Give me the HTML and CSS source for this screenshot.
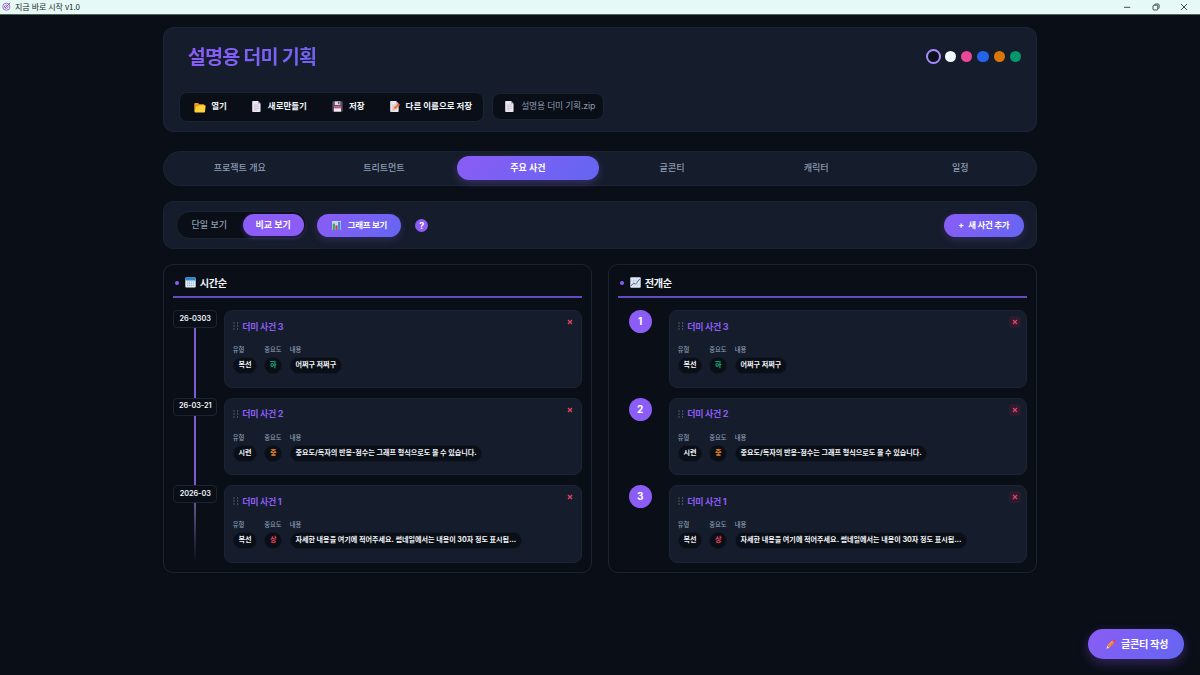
FILE: index.html
```html
<!DOCTYPE html>
<html lang="ko">
<head>
<meta charset="utf-8">
<title>지금 바로 시작 v1.0</title>
<link rel="stylesheet" href="styles.css">
</head>
<body>
<svg class="defs" width="0" height="0">
  <symbol id="page" viewBox="0 0 10 12"><path d="M1 0h5.6L9.5 3v8.2a.8.8 0 0 1-.8.8H1a.8.8 0 0 1-.8-.8V.8A.8.8 0 0 1 1 0z" fill="#ece6f2"/><path d="M6.6 0v3h2.9z" fill="#b9aec8"/><path d="M2 4.3h5.6M2 6.2h5.6M2 8.1h5.6M2 9.9h3.5" stroke="#b5adc4" stroke-width=".6"/></symbol>
  <symbol id="grip" viewBox="0 0 6 8"><g fill="#65708a"><circle cx="1" cy="1" r=".65"/><circle cx="4.6" cy="1" r=".65"/><circle cx="1" cy="4" r=".65"/><circle cx="4.6" cy="4" r=".65"/><circle cx="1" cy="7" r=".65"/><circle cx="4.6" cy="7" r=".65"/></g></symbol>
  <symbol id="cross" viewBox="0 0 6 6"><path d="M1 1l4 4M5 1L1 5" stroke="#e5405e" stroke-width="1.35" fill="none"/></symbol>
</svg>

<header class="titlebar">
  <svg class="app-icon" viewBox="0 0 10 10" fill="none" stroke="#9254c8"><circle cx="4.8" cy="5.2" r="4" stroke-width=".9"/><circle cx="4.8" cy="5.2" r="1.9" stroke-width=".8"/><path d="M3.5 6.5L9.2.8M2.3 4.6l1.7 1.8" stroke-width="1"/></svg>
  <span class="app-name">지금 바로 시작 v1.0</span>
  <div class="win-controls">
    <svg viewBox="0 0 8 8"><path d="M1 4.3h6.2"/></svg>
    <svg viewBox="0 0 8 8"><rect x="1" y="2.2" width="4.8" height="4.8" rx="1"/><path d="M2.6 1.9Q2.7 1 3.7 1H6q1.1 0 1.1 1.1v2.3q0 1-1 1.1"/></svg>
    <svg viewBox="0 0 8 8"><path d="M1 1l6 6M7 1L1 7"/></svg>
  </div>
</header>

<main class="shell">
  <section class="hero">
    <div class="hero-top">
      <h1 class="project-title">설명용 더미 기획</h1>
      <div class="themes">
        <i class="theme theme-dark"></i><i class="theme theme-light"></i><i class="theme theme-pink"></i><i class="theme theme-blue"></i><i class="theme theme-orange"></i><i class="theme theme-green"></i>
      </div>
    </div>
    <div class="hero-files">
      <div class="file-menu">
        <button class="file-btn"><svg class="folder" viewBox="0 0 12 11"><path d="M.3 1.8Q.3.9 1.2.9h2.9l1.2 1.3h4.2q.9 0 .9.9v6.5H1.2q-.9 0-.9-.9z" fill="#f09a1c"/><path d="M1.9 5q.3-.9 1.2-.9h1.6l1-.9h5q1 0 .9.9l-.6 5.5q-.1.9-1 .9H1.3q-.8 0-.7-.7z" fill="#ffd23a"/></svg>열기</button>
        <button class="file-btn"><svg class="page"><use href="#page"/></svg>새로만들기</button>
        <button class="file-btn"><svg class="disk" viewBox="0 0 12 12"><path d="M.4 1.4q0-1 1-1h9.2q1 0 1 1v9.2q0 1-1 1H1.4q-1 0-1-1z" fill="#5d4f69"/><path d="M3 .4h6v4H3z" fill="#ddd6e8"/><path d="M6.8.8h1.3v2.8H6.8z" fill="#493b58"/><path d="M2.2 6.2h7.6v5.4H2.2z" fill="#f3edf6"/><path d="M2.2 6.2h7.6v1.9H2.2z" fill="#e34f75"/></svg>저장</button>
        <button class="file-btn"><svg class="memo" viewBox="0 0 11 12"><use href="#page" width="10" height="12"/><path d="M3.4 9.7l.7-2.7 4.3-4 2 2.1-4.3 4z" fill="#f47a32"/><path d="M8.4 3l1-.8 1.7 1.9-.8 1z" fill="#e63d65"/><path d="M3.4 9.7l.7-2.7 2 2.1z" fill="#ffc08a"/></svg>다른 이름으로 저장</button>
      </div>
      <div class="file-name"><svg class="page small"><use href="#page"/></svg>설명용 더미 기획.zip</div>
    </div>
  </section>

  <nav class="tabs">
    <a class="tab">프로젝트 개요</a><a class="tab">트리트먼트</a><a class="tab active">주요 사건</a><a class="tab">글콘티</a><a class="tab">캐릭터</a><a class="tab">일정</a>
  </nav>

  <section class="toolbar">
    <div class="toggle"><span class="seg">단일 보기</span><span class="seg on">비교 보기</span></div>
    <button class="primary graph"><svg class="chart" viewBox="0 0 9 9"><path d="M0 0h9v9H0z" fill="#c9d3ea"/><path d="M.7 2.6h2.2V9H.7z" fill="#2fa866"/><path d="M3.4 4.4h2.2V9H3.4z" fill="#dc3467"/><path d="M6.1 1h2.2v8H6.1z" fill="#278ee0"/></svg>그래프 보기</button>
    <span class="help">?</span>
    <button class="primary add"><span class="plus">+</span>새 사건 추가</button>
  </section>

  <div class="columns">
    <section class="panel by-time">
      <h2 class="panel-title"><i class="bullet"></i><svg class="panel-icon" viewBox="0 0 11 11"><rect x=".3" y=".6" width="10.4" height="10" rx="1" fill="#e8eef8"/><path d="M.3 1.6q0-1 1-1h8.4q1 0 1 1v1.9H.3z" fill="#2389d2"/><path d="M2 5h7M2 6.8h7M2 8.6h7" stroke="#8ba6c8" stroke-width=".9" stroke-dasharray="1.2 .7"/></svg>시간순</h2>
      <div class="event-row"><div class="rail"><span class="date">26-0303</span><i class="line"></i></div>
        <article class="card"><svg class="close"><use href="#cross"/></svg><h3 class="card-title"><svg class="grip"><use href="#grip"/></svg>더미 사건 3</h3>
          <div class="fields"><div class="field kind"><label>유형</label><span class="chip">복선</span></div><div class="field level"><label>중요도</label><span class="chip low">하</span></div><div class="field"><label>내용</label><span class="chip">어쩌구 저쩌구</span></div></div></article></div>
      <div class="event-row"><div class="rail"><span class="date">26-03-21</span><i class="line"></i></div>
        <article class="card"><svg class="close"><use href="#cross"/></svg><h3 class="card-title"><svg class="grip"><use href="#grip"/></svg>더미 사건 2</h3>
          <div class="fields"><div class="field kind"><label>유형</label><span class="chip">시련</span></div><div class="field level"><label>중요도</label><span class="chip mid">중</span></div><div class="field"><label>내용</label><span class="chip">중요도/독자의 반응-점수는 그래프 형식으로도 볼 수 있습니다.</span></div></div></article></div>
      <div class="event-row"><div class="rail"><span class="date">2026-03</span><i class="line fade"></i></div>
        <article class="card"><svg class="close"><use href="#cross"/></svg><h3 class="card-title"><svg class="grip"><use href="#grip"/></svg>더미 사건 1</h3>
          <div class="fields"><div class="field kind"><label>유형</label><span class="chip">복선</span></div><div class="field level"><label>중요도</label><span class="chip high">상</span></div><div class="field"><label>내용</label><span class="chip">자세한 내용을 여기에 적어주세요. 썸네일에서는 내용이 30자 정도 표시됩...</span></div></div></article></div>
    </section>

    <section class="panel by-story">
      <h2 class="panel-title"><i class="bullet"></i><svg class="panel-icon" viewBox="0 0 11 11"><rect x=".3" y=".3" width="10.4" height="10.4" rx=".8" fill="#e3e8f3"/><path d="M.3 3.8h10.4M.3 7.3h10.4M3.8.3v10.4M7.3.3v10.4" stroke="#b8c4d9" stroke-width=".5"/><path d="M1 9l2.6-3 2 1.2L9.8 2" fill="none" stroke="#4a78b8" stroke-width="1"/></svg>전개순</h2>
      <div class="event-row"><div class="rail"><span class="order">1</span></div>
        <article class="card"><svg class="close"><use href="#cross"/></svg><h3 class="card-title"><svg class="grip"><use href="#grip"/></svg>더미 사건 3</h3>
          <div class="fields"><div class="field kind"><label>유형</label><span class="chip">복선</span></div><div class="field level"><label>중요도</label><span class="chip low">하</span></div><div class="field"><label>내용</label><span class="chip">어쩌구 저쩌구</span></div></div></article></div>
      <div class="event-row"><div class="rail"><span class="order">2</span></div>
        <article class="card"><svg class="close"><use href="#cross"/></svg><h3 class="card-title"><svg class="grip"><use href="#grip"/></svg>더미 사건 2</h3>
          <div class="fields"><div class="field kind"><label>유형</label><span class="chip">시련</span></div><div class="field level"><label>중요도</label><span class="chip mid">중</span></div><div class="field"><label>내용</label><span class="chip">중요도/독자의 반응-점수는 그래프 형식으로도 볼 수 있습니다.</span></div></div></article></div>
      <div class="event-row"><div class="rail"><span class="order">3</span></div>
        <article class="card"><svg class="close"><use href="#cross"/></svg><h3 class="card-title"><svg class="grip"><use href="#grip"/></svg>더미 사건 1</h3>
          <div class="fields"><div class="field kind"><label>유형</label><span class="chip">복선</span></div><div class="field level"><label>중요도</label><span class="chip high">상</span></div><div class="field"><label>내용</label><span class="chip">자세한 내용을 여기에 적어주세요. 썸네일에서는 내용이 30자 정도 표시됩...</span></div></div></article></div>
    </section>
  </div>
</main>

<button class="fab"><svg class="pencil" viewBox="0 0 11 11"><path d="M.4 10.6l1-3.4 2.4 2.4z" fill="#f7d6b4"/><path d="M1.4 7.2L7 1.6 9.4 4 3.8 9.6z" fill="#f5783c"/><path d="M2.2 6.4L7 1.6l.9.9-4.8 4.8z" fill="#ffa04d"/><path d="M7 1.6l.9-.9q.6-.5 1.2 0l1.2 1.2q.5.6 0 1.2l-.9.9z" fill="#e8386d"/></svg>글콘티 작성</button>
</body>
</html>
```
FILE: styles.css
```css
:root {
  --bg: #0a0e17;
  --surface: #151c2b;
  --line: #1c2433;
  --accent: #8b5cf6;
  --grad: linear-gradient(135deg, #8b5cf6, #6366f1);
  --muted: #8c9cb3;
}
* { box-sizing: border-box; }
body {
  margin: 0;
  height: 675px;
  overflow: hidden;
  background: var(--bg);
  color: #f1f5f9;
  font-family: Inter, "Noto Sans CJK KR", sans-serif;
  line-height: 1;
}
svg { display: block; flex: none; }
.defs { position: absolute; }
button { border: 0; background: none; color: inherit; font: inherit; padding: 0; }
h1, h2, h3 { margin: 0; }

.titlebar {
  display: flex;
  align-items: center;
  height: 15px;
  padding: 0 12px 1px 2px;
  background: #e6f9f5;
  border-bottom: 1px solid #52655f;
  color: #20282c;
}
.app-icon { width: 9px; height: 9px; margin-right: 4px; }
.app-name { font: 8px/1 "Noto Sans CJK KR", sans-serif; letter-spacing: -0.1px; }
.win-controls { display: flex; gap: 20.5px; margin-left: auto; }
.win-controls svg { width: 8px; height: 8px; fill: none; stroke: #30383b; stroke-width: .9; }

.shell { width: 874.6px; margin: 12px auto 0; }
.hero {
  height: 105px;
  padding: 17px 15px 0 16px;
  background: var(--surface);
  border: 1px solid var(--line);
  border-radius: 10px;
}
.hero-top { display: flex; justify-content: space-between; align-items: center; height: 24px; padding-left: 8px; }
.project-title {
  margin-top: -1px;
  font-size: 19.7px;
  font-weight: 700;
  letter-spacing: -.85px;
  line-height: 24px;
  background: linear-gradient(135deg, #8b5cf6, #6f64f2);
  background-clip: text;
  color: transparent;
}
.themes { display: flex; align-items: center; gap: 5px; margin-top: -1px; }
.theme { width: 11.3px; height: 11.3px; border-radius: 50%; }
.theme-dark { width: 15px; height: 15px; margin-right: -1.5px; background: #0c101b; border: 2px solid #a78bfa; }
.theme-light { background: #f4f9ff; }
.theme-pink { background: #ec4899; }
.theme-blue { background: #2563eb; }
.theme-orange { background: #d97706; }
.theme-green { background: #059669; }
.hero-files { display: flex; align-items: center; gap: 8px; margin: 22.5px 0 0 -.5px; }
.file-menu {
  display: flex;
  align-items: center;
  gap: 25px;
  width: 305px;
  height: 30px;
  padding-left: 13.5px;
  background: var(--bg);
  border: 1px solid var(--line);
  border-radius: 8px;
}
.file-btn { display: flex; align-items: center; white-space: nowrap; font-size: 8.5px; font-weight: 700; }
.folder { width: 12px; height: 11px; margin: 1px 5.5px 0 0; }
.page { width: 9px; height: 11px; margin-right: 7px; }
.page.small { width: 9px; height: 11px; margin-right: 7px; }
.disk { width: 11px; height: 11px; margin-right: 6px; }
.memo { width: 10px; height: 11px; margin-right: 6px; }
.file-name {
  display: flex;
  align-items: center;
  width: 112px;
  height: 27px;
  padding-left: 12px;
  background: var(--bg);
  border: 1px solid var(--line);
  border-radius: 8px;
  color: var(--muted);
  font-size: 8.8px;
  letter-spacing: -.2px;
  white-space: nowrap;
}

.tabs {
  display: grid;
  grid-template-columns: repeat(6, 1fr);
  gap: 2.5px;
  height: 35px;
  margin-top: 18.5px;
  padding: 4.5px 5.3px;
  background: var(--surface);
  border: 1px solid var(--line);
  border-radius: 18px;
}
.tab { display: flex; align-items: center; justify-content: center; padding-bottom: 1px; border-radius: 12px; color: var(--muted); font-size: 9px; font-weight: 500; }
.tab.active { background: var(--grad); color: #fff; font-weight: 700; box-shadow: 0 3px 8px #8b5cf64d; }

.toolbar {
  display: flex;
  align-items: center;
  height: 48px;
  margin-top: 15.5px;
  padding: 0 12.5px 0 12px;
  background: var(--surface);
  border: 1px solid var(--line);
  border-radius: 10px;
}
.toggle { display: flex; width: 131px; height: 28px; padding: 2px; background: var(--bg); border: 1px solid var(--line); border-radius: 14px; }
.seg { display: flex; align-items: center; justify-content: center; width: 61px; padding-bottom: 1px; color: var(--muted); font-size: 9px; font-weight: 500; border-radius: 12px; }
.seg.on { width: 61px; margin-left: auto; background: var(--accent); color: #fff; font-weight: 700; box-shadow: 0 2px 5px #8b5cf64d; }
.primary {
  display: flex;
  align-items: center;
  justify-content: center;
  height: 23px;
  border-radius: 12px;
  background: var(--grad);
  color: #fff;
  font-size: 8.5px;
  font-weight: 700;
  letter-spacing: -.3px;
  box-shadow: 0 3px 8px #8b5cf638;
}
.graph { width: 84px; margin-left: 10.5px; padding-left: 1px; }
.chart { width: 9px; height: 9px; margin-right: 6.5px; }
.help { display: flex; align-items: center; justify-content: center; width: 13px; height: 13px; margin-left: 14px; border-radius: 50%; background: var(--accent); color: #fff; font-size: 9px; font-weight: 700; }
.add { width: 80px; margin-left: auto; }
.plus { margin-right: 4.5px; }

.columns { display: grid; grid-template-columns: 1fr 1fr; gap: 15.5px; margin-top: 15px; }
.panel { height: 309px; padding: 0 9.5px; border: 1px solid var(--line); border-radius: 10px; }
.panel-title { display: flex; align-items: center; height: 33px; padding: 4px 0 0 1.5px; border-bottom: 2px solid #664bc0; font-size: 10.2px; font-weight: 700; letter-spacing: -.4px; line-height: 12px; }
.bullet { width: 4px; height: 4px; margin: 1px 6.5px 0 0; border-radius: 50%; background: var(--accent); }
.panel-icon { width: 11px; height: 11px; margin-right: 3.5px; }
.event-row { display: flex; height: 77.5px; margin-bottom: 10px; }
.panel-title + .event-row { margin-top: 12px; }
.rail { display: flex; flex-direction: column; align-items: center; flex: none; width: 44px; margin-right: 7px; }
.date { display: flex; align-items: center; justify-content: center; flex: none; width: 44px; height: 18px; padding-bottom: 1px; border: 1px solid var(--line); border-radius: 4px; font-size: 7.3px; font-weight: 600; letter-spacing: -.05px; }
.line { flex: none; width: 2px; height: 69.5px; background: #7d5cd2; }
.line.fade { height: 59px; background: linear-gradient(#66548f, transparent); }
.order { display: flex; align-items: center; justify-content: center; width: 23px; height: 23px; padding-bottom: 1px; border-radius: 50%; background: var(--accent); color: #fff; font-size: 10px; font-weight: 700; }
.card { position: relative; flex: 1; min-width: 0; padding: 9.5px 0 0 7.5px; background: var(--surface); border: 1px solid var(--line); border-radius: 8px; }
.card-title { display: flex; align-items: center; height: 11px; color: var(--accent); font-size: 9px; font-weight: 700; letter-spacing: -.3px; }
.grip { width: 6px; height: 8px; margin-right: 3.5px; }
.close { position: absolute; top: 8px; right: 8px; width: 6px; height: 6px; }
.by-story .close { top: 5px; right: 5px; width: 12px; height: 12px; padding: 3px; border-radius: 3px; background: #2d1b2f; }
.fields { display: flex; margin-top: 14.5px; }
.field { display: flex; flex-direction: column; align-items: flex-start; }
.field label { height: 8px; margin-bottom: 3px; color: var(--muted); font-size: 6.3px; font-weight: 500; line-height: 8px; }
.kind { width: 31.5px; }
.level { width: 25.5px; }
.chip { display: flex; align-items: center; height: 17px; padding: 0 4.7px 1px; background: var(--bg); border: 1px solid #111724; border-radius: 9px; font-size: 7.08px; font-weight: 700; white-space: nowrap; }
.low { color: #10b981; }
.mid { color: #f58a1f; }
.high { color: #f43f5e; }

.fab {
  position: absolute;
  right: 16px;
  bottom: 16px;
  display: flex;
  align-items: center;
  justify-content: center;
  width: 96px;
  height: 30px;
  padding-left: 2px;
  border-radius: 15px;
  background: var(--grad);
  color: #fff;
  font-size: 10.2px;
  font-weight: 700;
  letter-spacing: -.4px;
  box-shadow: 0 4px 12px #8b5cf650;
}
.pencil { width: 10px; height: 10px; margin-right: 5px; }
```
